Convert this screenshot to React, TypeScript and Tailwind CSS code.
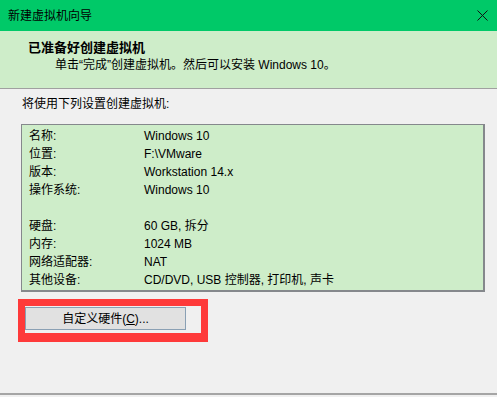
const font = "font-['Liberation_Sans','Noto_Sans_CJK_SC',sans-serif]";

const rows: [string, string][] = [
  ["名称:", "Windows 10"],
  ["位置:", "F:\\VMware"],
  ["版本:", "Workstation 14.x"],
  ["操作系统:", "Windows 10"],
  ["", ""],
  ["硬盘:", "60 GB, 拆分"],
  ["内存:", "1024 MB"],
  ["网络适配器:", "NAT"],
  ["其他设备:", "CD/DVD, USB 控制器, 打印机, 声卡"],
];

export default function App() {
  return (
    <div className={`flex h-[397px] w-[497px] flex-col bg-[#f0f0f0] text-[12px] text-black ${font}`}>
      {/* title bar */}
      <div className="flex h-[31px] items-center justify-between bg-[#00c968] pl-[8px] pr-[9px]">
        <span className="leading-none">新建虚拟机向导</span>
        <svg width="11" height="11" viewBox="0 0 11 11">
          <path d="M0.5 0.5 L10.5 10.5 M10.5 0.5 L0.5 10.5" stroke="#111" strokeWidth="1" fill="none" />
        </svg>
      </div>

      {/* header */}
      <div className="h-[58px] border-b border-[#a0a0a0] bg-[#ceedc9] pl-[28px] pt-[8px]">
        <div className="text-[13px] font-bold leading-[18px]">已准备好创建虚拟机</div>
        <div className="pl-[27px] leading-[16px]">单击“完成”创建虚拟机。然后可以安装 Windows 10。</div>
      </div>

      {/* body */}
      <div className="pl-[21px] pr-[12px] pt-[6px]">
        <div className="pl-px leading-[18px]">将使用下列设置创建虚拟机:</div>
        <div className="mt-[11px] h-[168px] border border-b-2 border-r-2 border-[#85888c] bg-[#ceedc9] pl-[7px] pt-[2px]">
          {rows.map(([k, v], i) => (
            <div key={i} className="flex h-[18px] items-center leading-[18px]">
              <span className="w-[115px]">{k}</span>
              <span>{v}</span>
            </div>
          ))}
        </div>
      </div>

      <div className="mt-[7px] pl-[18px]">
        <div className="h-[43px] w-[190px] border-[7px] border-b-[9px] border-[#fe3a3a] pt-px">
          <button className="flex h-[23px] w-[161px] items-center justify-center border border-[#8aa0b4] bg-[#e1e1e1] leading-none">
            自定义硬件(<span className="underline">C</span>)...
          </button>
        </div>
      </div>

      <div className="flex-1" />
      <div className="h-[4px] border-t-2 border-[#a5a5a5]" />
    </div>
  );
}
